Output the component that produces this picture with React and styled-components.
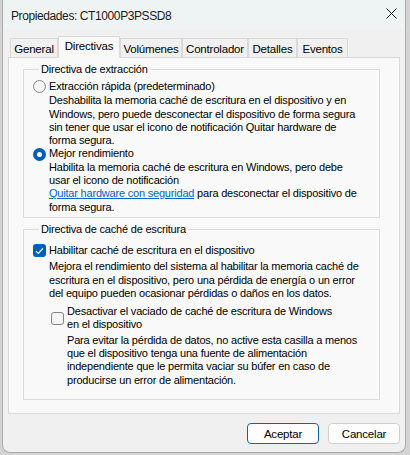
import React from 'react';
import styled, { createGlobalStyle } from 'styled-components';

const GlobalStyle = createGlobalStyle`
  body {
    margin: 0;
    background: #d4d4d4;
    font-family: "Liberation Sans", Arial, sans-serif;
    font-size: 11px;
    letter-spacing: -0.2px;
    color: #000;
  }
`;

const Window = styled.div`
  margin-left: 2px;
  width: 404px;
  height: 453px;
  box-sizing: border-box;
  background: #f0f0f0;
  border: 1px solid #a9a9a9;
  border-top: none;
  border-radius: 0 0 8px 8px;
  display: flex;
  flex-direction: column;
  overflow: hidden;
`;

const TitleBar = styled.div`
  height: 29px;
  flex: none;
  background: #eef4f3;
  display: flex;
  align-items: center;
  justify-content: space-between;
  padding: 0 8px 0 8px;
  font-size: 12px;
  letter-spacing: -0.4px;
  color: #1a1a1a;
  span {
    position: relative;
    top: 1px;
  }
`;

const CloseBtn = styled.div`
  width: 12px;
  height: 12px;
  display: flex;
  align-items: center;
  justify-content: center;
  position: relative;
  top: -1px;
`;

const Content = styled.div`
  padding: 8px 5px 0 5px;
  display: flex;
  flex-direction: column;
`;

const TabRow = styled.div`
  display: flex;
  align-items: flex-end;
  height: 21px;
  padding-left: 2px;
  margin-bottom: -1px;
  position: relative;
  z-index: 1;
`;

const Tab = styled.div`
  box-sizing: border-box;
  width: ${p => p.$w}px;
  height: ${p => (p.$active ? '22px' : '20px')};
  padding-top: ${p => (p.$active ? '3px' : '4px')};
  border: 1px solid #d9d9d9;
  border-bottom: ${p => (p.$active ? '1px solid #f9f9f9' : '1px solid #d9d9d9')};
  background: ${p => (p.$active ? '#f9f9f9' : '#f0f0f0')};
  text-align: center;
  white-space: nowrap;
  line-height: 13px;
  font-size: 11.5px;
`;

const Panel = styled.div`
  box-sizing: border-box;
  height: 357px;
  background: #f9f9f9;
  border: 1px solid #d9d9d9;
  padding: 5px 19px 0 14px;
  display: flex;
  flex-direction: column;
  gap: 5px;
`;

const Group = styled.fieldset`
  margin: 0;
  border: 1px solid #dcdcdc;
  padding: ${p => p.$top}px 0 ${p => p.$bottom}px 9px;
  line-height: 13.3px;
  white-space: nowrap;
  min-width: 0;
`;

const Legend = styled.legend`
  margin-left: 6px;
  padding: 0 2px;
  line-height: 13.3px;
  font-size: 11px;
`;

const OptionRow = styled.div`
  display: flex;
  align-items: center;
  gap: 3px;
  height: ${p => p.$h || 13.3}px;
`;

const Desc = styled.div`
  padding-left: ${p => p.$indent || 16}px;
  margin-top: ${p => p.$mt || 0}px;
`;

const Radio = styled.span`
  box-sizing: border-box;
  flex: none;
  width: 13px;
  height: 13px;
  border-radius: 50%;
  border: ${p => (p.$on ? 'none' : '1px solid #858585')};
  background: ${p => (p.$on ? '#005fb8' : '#f5f5f5')};
  display: flex;
  align-items: center;
  justify-content: center;
  &::after {
    content: '';
    display: ${p => (p.$on ? 'block' : 'none')};
    width: 5px;
    height: 5px;
    border-radius: 50%;
    background: #fff;
  }
`;

const Box = styled.span`
  box-sizing: border-box;
  flex: none;
  width: 13px;
  height: 13px;
  border-radius: 3px;
  border: ${p => (p.$on ? 'none' : '1px solid #858585')};
  background: ${p => (p.$on ? '#005fb8' : '#f5f5f5')};
  display: flex;
  align-items: center;
  justify-content: center;
`;

const SubOption = styled.div`
  display: flex;
  align-items: center;
  gap: 3px;
  padding-left: 18px;
  margin-top: 5px;
`;

const Link = styled.span`
  color: #0066cc;
  text-decoration: underline;
`;

const Footer = styled.div`
  display: flex;
  justify-content: flex-end;
  gap: 9px;
  margin-top: 9px;
`;

const Button = styled.button`
  box-sizing: border-box;
  width: 72px;
  height: 21px;
  border-radius: 4px;
  border: 1px solid ${p => (p.$primary ? '#0067c0' : '#d0d0d0')};
  background: #fdfdfd;
  font-family: inherit;
  font-size: 11.5px;
  letter-spacing: -0.2px;
  color: #000;
  padding: 0;
`;

function Check() {
  return (
    <svg width="9" height="8" viewBox="0 0 9 8">
      <path d="M1 4.2 L3.4 6.5 L8 1.3" fill="none" stroke="#fff" strokeWidth="1.2" />
    </svg>
  );
}

const tabs = [
  { label: 'General', w: 48 },
  { label: 'Directivas', w: 62 },
  { label: 'Volúmenes', w: 62 },
  { label: 'Controlador', w: 66 },
  { label: 'Detalles', w: 49 },
  { label: 'Eventos', w: 51 },
];

export default function App() {
  return (
    <>
      <GlobalStyle />
      <Window>
        <TitleBar>
          <span>Propiedades: CT1000P3PSSD8</span>
          <CloseBtn>
            <svg width="11" height="11" viewBox="0 0 11 11">
              <path d="M0.5 0.5 L10.5 10.5 M10.5 0.5 L0.5 10.5" stroke="#1a1a1a" strokeWidth="1" />
            </svg>
          </CloseBtn>
        </TitleBar>
        <Content>
          <TabRow>
            {tabs.map(t => (
              <Tab key={t.label} $w={t.w} $active={t.label === 'Directivas'}>{t.label}</Tab>
            ))}
          </TabRow>
          <Panel>
            <Group $top={3} $bottom={3}>
              <Legend>Directiva de extracción</Legend>
              <OptionRow $h={15}>
                <Radio />
                <span>Extracción rápida (predeterminado)</span>
              </OptionRow>
              <Desc>
                Deshabilita la memoria caché de escritura en el dispositivo y en<br />
                Windows, pero puede desconectar el dispositivo de forma segura<br />
                sin tener que usar el icono de notificación Quitar hardware de<br />
                forma segura.
              </Desc>
              <OptionRow>
                <Radio $on />
                <span>Mejor rendimiento</span>
              </OptionRow>
              <Desc>
                Habilita la memoria caché de escritura en Windows, pero debe<br />
                usar el icono de notificación<br />
                <Link>Quitar hardware con seguridad</Link> para desconectar el dispositivo de<br />
                forma segura.
              </Desc>
            </Group>
            <Group $top={5} $bottom={12}>
              <Legend>Directiva de caché de escritura</Legend>
              <OptionRow $h={19}>
                <Box $on><Check /></Box>
                <span>Habilitar caché de escritura en el dispositivo</span>
              </OptionRow>
              <Desc>
                Mejora el rendimiento del sistema al habilitar la memoria caché de<br />
                escritura en el dispositivo, pero una pérdida de energía o un error<br />
                del equipo pueden ocasionar pérdidas o daños en los datos.
              </Desc>
              <SubOption>
                <Box />
                <span>
                  Desactivar el vaciado de caché de escritura de Windows<br />
                  en el dispositivo
                </span>
              </SubOption>
              <Desc $indent={34} $mt={2}>
                Para evitar la pérdida de datos, no active esta casilla a menos<br />
                que el dispositivo tenga una fuente de alimentación<br />
                independiente que le permita vaciar su búfer en caso de<br />
                producirse un error de alimentación.
              </Desc>
            </Group>
          </Panel>
          <Footer>
            <Button $primary>Aceptar</Button>
            <Button>Cancelar</Button>
          </Footer>
        </Content>
      </Window>
    </>
  );
}
